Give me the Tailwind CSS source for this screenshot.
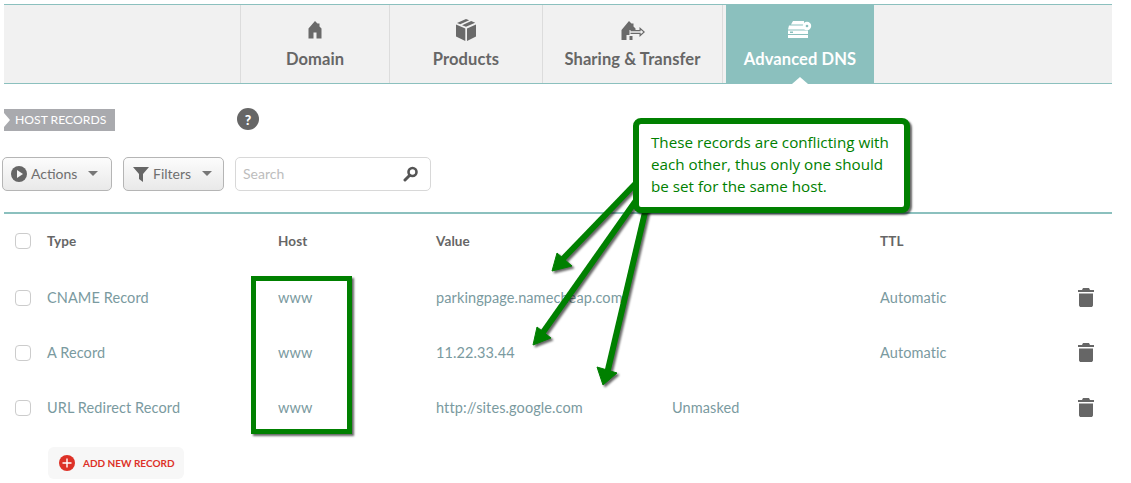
<!DOCTYPE html>
<html lang="en">
<head>
  <meta charset="UTF-8" />
  <title>Advanced DNS</title>
  <script src="https://cdn.jsdelivr.net/npm/@tailwindcss/browser@4"></script>
</head>
<body class="bg-white overflow-hidden font-['Lato',sans-serif]">
  <div class="relative w-[1131px] h-[483px] overflow-hidden pt-[4px]">

    <!-- tabs -->
    <nav class="ml-[4px] w-[1108px] h-[80px] flex bg-[#f1f1f1] border-y border-[#8bc0be] text-[#666] text-[16.500px] tracking-[0.1px] font-bold">
      <div class="w-[237px] border-r border-[#dcdcdc]"></div>
      <a class="w-[149px] border-r border-[#dcdcdc] flex flex-col items-center pt-[15px]">
        <svg class="w-[20px] h-[20px]" viewBox="0 0 20 20" fill="#6a6a6a"><path d="M10 1l2.500 2.500h2v3l2 2v10h-5v-6h-3v6h-5v-10z"/></svg>
        <span class="mt-[7px]">Domain</span>
      </a>
      <a class="w-[153px] border-r border-[#dcdcdc] flex flex-col items-center pt-[13px]">
        <svg class="w-[24px] h-[24px]" viewBox="0 0 24 24" fill="#6a6a6a"><path d="M2 6.500l9.300 4v12.500l-9.300-4.500zM13 10.500l9-4v12l-9 4.500zM12 1l3.200 1.300-9 4-3.200-1.300zM17.200 3.100l4 1.700-9.200 4-3.900-1.600z"/></svg>
        <span class="mt-[5px]">Products</span>
      </a>
      <a class="w-[180px] border-r border-[#dcdcdc] flex flex-col items-center pt-[15px]">
        <svg class="w-[26px] h-[20px]" viewBox="0 0 26 20" fill="#6a6a6a"><path d="M9 1l2.500 2.500h2v3l2 2v1.500h-6v6h3v4h-3v-5h-3v5h-5v-10z"/><path d="M10.500 10h9v-3l5.500 5-5.500 5v-3h-9v-1.200h10.200v1.500l2.600-2.300-2.600-2.300v1.500h-10.200z"/></svg>
        <span class="mt-[7px]">Sharing &amp; Transfer</span>
      </a>
      <a class="relative ml-[3px] w-[148px] -my-px bg-[#8bc0be] text-white flex flex-col items-center pt-[16px]">
        <svg class="w-[26px] h-[20px]" viewBox="0 0 26 20" fill="#fff"><path d="M6 1h11v3.500h-13zM2 5.500h17v4h-18zM1 10.500h20v3.500h-20zM3 11.500v1.500h3v-1.500zM1 15h20v3h-20z"/><circle cx="20" cy="6" r="4.200"/><circle cx="20" cy="6" r="1.300" fill="#8bc0be"/></svg>
        <span class="mt-[7px]">Advanced DNS</span>
        <span class="absolute bottom-0 left-[66px] w-0 h-0 border-x-[8px] border-x-transparent border-b-[7px] border-b-white"></span>
      </a>
    </nav>

    <!-- host records heading -->
    <div class="mt-[25px] h-[22px] flex items-center">
      <div class="relative ml-[4px] w-[111px] h-[22px] bg-[#a9aaae] text-white text-[12.200px] pl-[11px] leading-[21px]">
        HOST RECORDS
        <span class="absolute left-0 top-[4px] w-0 h-0 border-y-[7px] border-y-transparent border-l-[6px] border-l-white"></span>
      </div>
      <div class="ml-[122px] mb-[2px] w-[22px] h-[22px] rounded-full bg-[#666] text-white text-[14px] font-black flex items-center justify-center">?</div>
    </div>

    <!-- toolbar -->
    <div class="mt-[26px] ml-[2px] flex items-center gap-[11px] text-[14px] text-[#6f6f6f]">
      <button class="w-[110px] h-[34px] flex items-center pl-[8px] pb-[2px] rounded-[5px] border border-[#b5b5b5] bg-linear-to-b from-[#fcfcfc] to-[#e9e9e9]">
        <svg class="w-[16px] h-[16px] translate-y-px" viewBox="0 0 16 16"><circle cx="8" cy="8" r="8" fill="#666"/><path d="M6 4l6 4-6 4z" fill="#f5f5f5"/></svg>
        <span class="ml-[4px]">Actions</span>
        <span class="ml-[11px] w-0 h-0 border-x-[5px] border-x-transparent border-t-[5px] border-t-[#777]"></span>
      </button>
      <button class="w-[101px] h-[34px] flex items-center pl-[9px] pb-[2px] rounded-[5px] border border-[#b5b5b5] bg-linear-to-b from-[#fcfcfc] to-[#e9e9e9]">
        <svg class="w-[16px] h-[16px] translate-y-px" viewBox="0 0 16 16" fill="#666"><path d="M0 1h16l-6 7v8l-4-3v-5z"/></svg>
        <span class="ml-[4px]">Filters</span>
        <span class="ml-[11px] w-0 h-0 border-x-[5px] border-x-transparent border-t-[5px] border-t-[#777]"></span>
      </button>
      <div class="w-[196px] h-[34px] flex items-center justify-between pl-[7px] pr-[11px] pb-[2px] rounded-[5px] border border-[#d8d8d8] text-[#bdbdbd]">
        <span>Search</span>
        <svg class="w-[16px] h-[16px] translate-y-px" viewBox="0 0 16 16" fill="none" stroke="#555"><circle cx="9.500" cy="6" r="4" stroke-width="2.600"/><path d="M6.500 9.500l-4.500 4.500" stroke-width="3" stroke-linecap="round"/></svg>
      </div>
    </div>

    <!-- table -->
    <div class="mt-[21px] ml-[4px] w-[1108px] border-t-2 border-[#8bc0be] text-[14.500px] tracking-[0.1px] text-[#7a9aa0]">
      <div class="h-[56px] pb-[2px] grid grid-cols-[43px_231px_158px_236px_208px_198px_1fr] items-center font-bold text-[13.500px] text-[#666]">
        <span class="ml-[11px] w-[16px] h-[16px] rounded-[4px] border border-[#ccc]"></span>
        <span>Type</span><span>Host</span><span>Value</span><span></span><span>TTL</span><span></span>
      </div>
      <div class="h-[55px] grid grid-cols-[43px_231px_158px_236px_208px_198px_1fr] items-center">
        <span class="ml-[11px] w-[16px] h-[16px] rounded-[4px] border border-[#ccc]"></span>
        <span>CNAME Record</span><span>www</span><span class="whitespace-nowrap">parkingpage.namecheap.com</span><span></span><span>Automatic</span>
        <svg class="w-[16px] h-[20px] -translate-y-px" viewBox="0 0 16 20" fill="#666"><path d="M5 1h6l1 2h4v2h-16v-2h4zM1 6.500h14v12l-1 1.500h-12l-1-1.500z"/></svg>
      </div>
      <div class="h-[55px] grid grid-cols-[43px_231px_158px_236px_208px_198px_1fr] items-center">
        <span class="ml-[11px] w-[16px] h-[16px] rounded-[4px] border border-[#ccc]"></span>
        <span>A Record</span><span>www</span><span>11.22.33.44</span><span></span><span>Automatic</span>
        <svg class="w-[16px] h-[20px] -translate-y-px" viewBox="0 0 16 20" fill="#666"><path d="M5 1h6l1 2h4v2h-16v-2h4zM1 6.500h14v12l-1 1.500h-12l-1-1.500z"/></svg>
      </div>
      <div class="h-[55px] grid grid-cols-[43px_231px_158px_236px_208px_198px_1fr] items-center">
        <span class="ml-[11px] w-[16px] h-[16px] rounded-[4px] border border-[#ccc]"></span>
        <span>URL Redirect Record</span><span>www</span><span>http://sites.google.com</span><span>Unmasked</span><span></span>
        <svg class="w-[16px] h-[20px] -translate-y-px" viewBox="0 0 16 20" fill="#666"><path d="M5 1h6l1 2h4v2h-16v-2h4zM1 6.500h14v12l-1 1.500h-12l-1-1.500z"/></svg>
      </div>
      <button class="mt-[12px] ml-[44px] w-[136px] h-[32px] flex items-center pl-[11px] rounded-[6px] bg-[#f7f7f7] text-[#dd3127] text-[10px] tracking-normal font-bold">
        <svg class="w-[16px] h-[16px]" viewBox="0 0 16 16"><circle cx="8" cy="8" r="8" fill="#dd3127"/><path d="M8 3.500v9M3.500 8h9" stroke="#fff" stroke-width="1.400"/></svg>
        <span class="ml-[8px]">ADD NEW RECORD</span>
      </button>
    </div>

    <!-- annotations drawn on top of the screenshot -->
    <svg class="absolute inset-0 drop-shadow-[2px_2px_1px_rgba(0,0,0,0.6)]" width="1131" height="483" fill="none" stroke="#008000" stroke-width="6">
      <path d="M638 181L558 264"/><path d="M552 271l5-18 15 13z" fill="#008000" stroke-width="1"/>
      <path d="M642 192L539 338"/><path d="M533 345l4-18 14 11z" fill="#008000" stroke-width="1"/>
      <path d="M646 208L606 378"/><path d="M603 385l-6-18 20 6z" fill="#008000" stroke-width="1"/>
    </svg>
    <div class="absolute left-[251px] top-[276px] w-[101px] h-[158px] border-[5px] border-[#008000] shadow-[2px_2px_2px_rgba(0,0,0,0.6)]"></div>
    <div class="absolute left-[633px] top-[118px] w-[277px] h-[95px] rounded-[8px] border-[6px] border-[#008000] bg-white shadow-[2px_2px_2px_rgba(0,0,0,0.6)] pl-[12px] pt-[7px] font-['Open_Sans',sans-serif] text-[15.200px] leading-[22px] text-[#008000]">
      These records are conflicting with<br>each other, thus only one should<br>be set for the same host.
    </div>
  </div>
</body>
</html>
